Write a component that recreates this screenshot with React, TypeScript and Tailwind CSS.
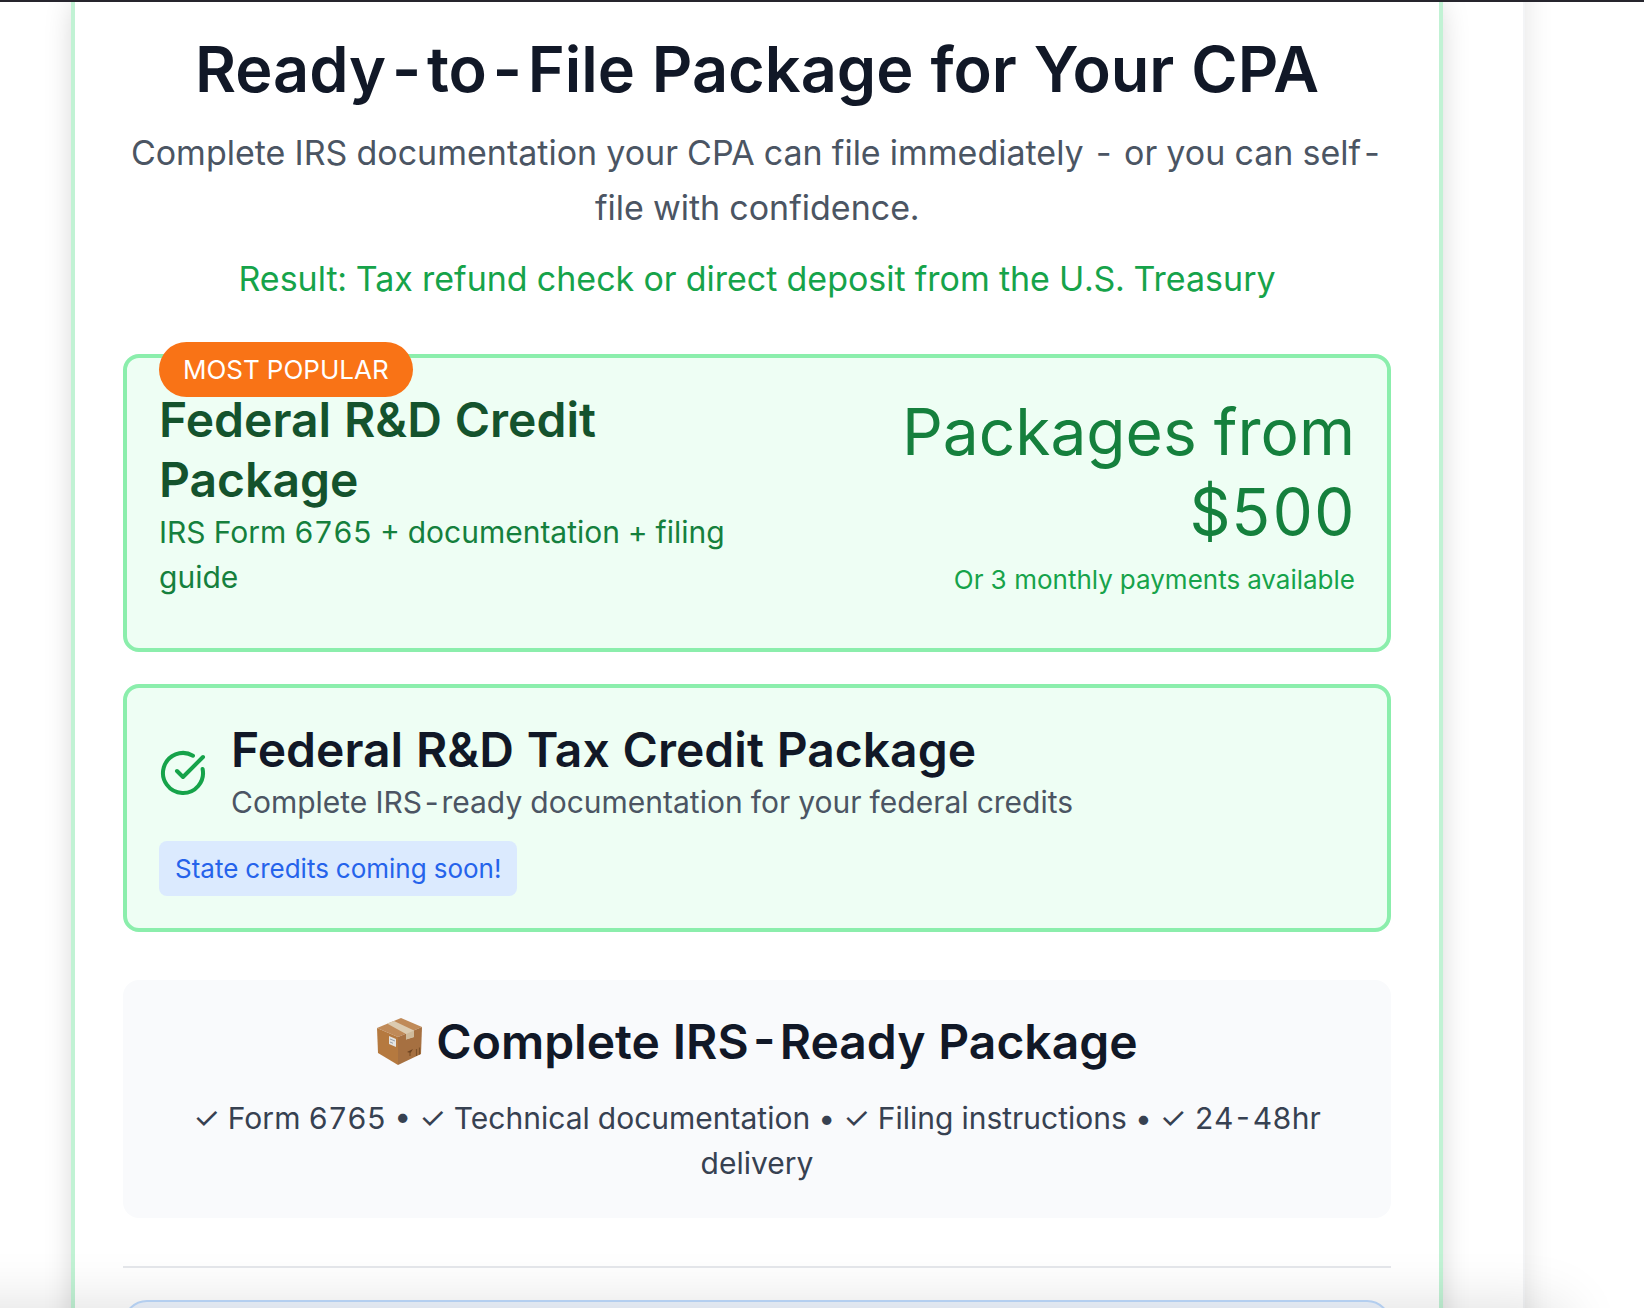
import { CircleCheckBig } from "lucide-react";

function PackageIcon() {
  return (
    <svg viewBox="0 0 48 48" className="size-12 shrink-0" aria-hidden="true">
      <path d="M1 10 25 0 46 9 22 19z" fill="#c08a58" />
      <path d="M1 10 22 19 22 47 2 35z" fill="#b5793f" />
      <path d="M22 19 46 9 45 36 22 47z" fill="#a67041" />
      <path d="M11 5.500 18 3 38 12.500 38 19 30 21.500 30 16z" fill="#dccbb0" />
      <path d="M30 16 38 12.500 38 19 30 21.500z" fill="#cfbb9c" />
      <path d="M13 18 20 21 20 29 13 26z" fill="#e4e4e2" />
      <path d="M14 21 19 23M14 24 17 25.300" stroke="#98a0a8" strokeWidth="1" />
      <path d="M31 34 37 31 34.500 35z" fill="#6c4220" />
      <path d="M34 34v4M40.500 31v7M43.500 29.500v7" stroke="#7c5028" strokeWidth="1.200" />
    </svg>
  );
}

export default function App() {
  return (
    <div className="relative h-screen overflow-hidden border-t-2 border-[#26252d] bg-white font-['Inter',sans-serif] text-gray-900 tabular-nums">
      <div className="-mt-32 mr-[119px] border-r-2 border-gray-100 pt-[103px] pr-20 pl-[71px] shadow-[0_16px_32px_-6px_rgba(0,0,0,0.16)]">
        <main className="rounded-3xl border-4 border-[#c1f2d4] bg-white p-12 shadow-[0_16px_32px_-6px_rgba(0,0,0,0.22)]">
          <header className="text-center">
            <h1 className="text-[63px] leading-[80px] font-semibold text-[#111827]">Ready-to-File Package for Your CPA</h1>
            <p className="mt-4 text-[34px] leading-[55px] text-[#4b5563]">
              Complete IRS documentation your CPA can file immediately - or you can self-file with confidence.
            </p>
            <p className="mt-4 text-[34px] leading-[55px] text-[#16a34a]">
              Result: Tax refund check or direct deposit from the U.S. Treasury
            </p>
          </header>

          <section className="relative mt-12 rounded-2xl border-4 border-[#8beeac] bg-[#eefef4] p-8">
            <span className="absolute -top-4 left-8 rounded-full bg-[#f97316] px-6 py-2 text-[26px] leading-[39px] text-white">
              MOST POPULAR
            </span>
            <div className="mb-4 flex items-center justify-between">
              <div className="w-1/2">
                <h2 className="text-5xl leading-[60px] font-semibold text-[#14532d]">Federal R&amp;D Credit Package</h2>
                <p className="text-3xl leading-[45px] text-[#15803d]">IRS Form 6765 + documentation + filing guide</p>
              </div>
              <div className="w-2/5 text-right">
                <p className="text-[64px] leading-[80px] text-[#15803d]">Packages from $500</p>
                <p className="mt-2 text-[26px] leading-[39px] text-[#16a34a]">Or 3 monthly payments available</p>
              </div>
            </div>
          </section>

          <section className="mt-8 rounded-2xl border-4 border-[#8beeac] bg-[#eefef4] p-8">
            <div className="flex items-center gap-6">
              <CircleCheckBig className="size-12 shrink-0 text-[#16a34a]" />
              <div>
                <h2 className="text-5xl leading-[60px] font-semibold text-[#111827]">Federal R&amp;D Tax Credit Package</h2>
                <p className="text-3xl leading-[45px] text-[#4b5563]">
                  Complete IRS-ready documentation for your federal credits
                </p>
              </div>
            </div>
            <p className="mt-4 w-fit rounded-lg bg-[#dbeafe] px-4 py-2 text-[26px] leading-[39px] text-[#2563eb]">
              State credits coming soon!
            </p>
          </section>

          <section className="mt-12 rounded-2xl bg-[#f9fafc] p-8 text-center">
            <h2 className="flex items-center justify-center gap-3 text-5xl leading-[60px] font-semibold text-[#111827]">
              <PackageIcon />
              Complete IRS-Ready Package
            </h2>
            <p className="mt-6 text-3xl leading-[45px] text-[#374151]">
              ✓ Form 6765 • ✓ Technical documentation • ✓ Filing instructions • ✓ 24-48hr delivery
            </p>
          </section>

          <hr className="mt-12 border-t-2 border-[#e5e7eb]" />
          <div className="mt-8 h-40 rounded-3xl border-2 border-[#bfdbfe] bg-[#eff6ff]" />
        </main>
      </div>
      <div className="pointer-events-none absolute top-full right-20 -left-20 h-40 shadow-[0_0_60px_rgba(0,0,0,0.14)]" />
    </div>
  );
}
